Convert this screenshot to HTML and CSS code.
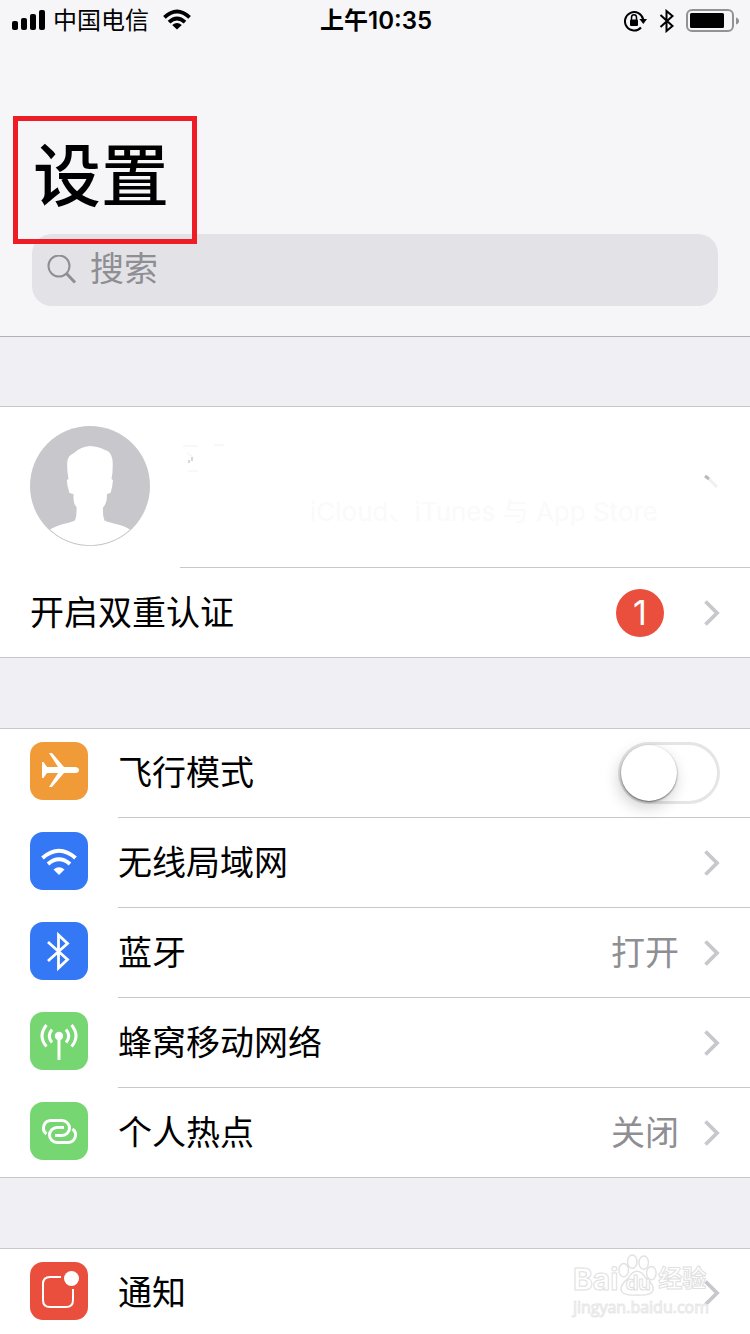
FILE: index.html
```html
<!DOCTYPE html>
<html lang="zh-CN">
<head>
<meta charset="utf-8">
<meta name="viewport" content="width=device-width, initial-scale=1">
<title>设置</title>
<link rel="stylesheet" href="styles.css">
</head>
<body>
<svg class="defs" aria-hidden="true">
  <symbol id="chevron" viewBox="0 0 16 26"><path d="M1.500 1.500 13 13 1.500 24.500" fill="none" stroke="currentColor" stroke-width="3.800"/></symbol>
</svg>
<div class="screen">
  <header class="header">
    <div class="status">
      <div class="status-left">
        <svg width="34" height="22" viewBox="0 0 34 22"><rect x="0" y="12" width="6" height="9" rx="2"/><rect x="9" y="9" width="6" height="12" rx="2"/><rect x="18" y="5" width="6" height="16" rx="2"/><rect x="27" y="1" width="6" height="20" rx="2"/></svg>
        <span class="carrier">中国电信</span>
        <svg width="28" height="22" viewBox="0 0 28 22"><g fill="none" stroke="#000" stroke-width="3.8"><path d="M1.4 8.4Q14-3.400 26.600 8.400"/><path d="M6 13.200Q14 5.800 22 13.200"/></g><path d="M14 20.500 9.200 16Q14 12 18.800 16Z"/></svg>
      </div>
      <time class="clock">上午10:35</time>
      <div class="status-right">
        <svg width="24" height="22" viewBox="0 0 24 22"><path d="M17 17.500A9.200 9.200 0 1 1 19.200 9.500" fill="none" stroke="#000" stroke-width="2"/><path d="M15.400 9h7.600l-3.700 5z"/><rect x="6" y="9.500" width="8" height="6.500" rx="1"/><path d="M7.500 10V7.500a2.500 2.700 0 0 1 5 0V10" fill="none" stroke="#000" stroke-width="1.500"/></svg>
        <svg width="16" height="24" viewBox="0 0 16 24"><path d="M1.500 6 13.500 17 7.500 22V2l6 5L1.500 18" fill="none" stroke="#000" stroke-width="2"/></svg>
        <svg width="54" height="24" viewBox="0 0 54 24"><rect x="1" y="1" width="46" height="21" rx="5" fill="none" stroke="#929294" stroke-width="2"/><rect x="4" y="4" width="34" height="15" rx="1.500"/><path d="M50 8.500q3 1 3 3.500t-3 3.500z" fill="#929294"/></svg>
      </div>
    </div>
    <h1 class="title">设置</h1>
    <label class="search">
      <svg width="30" height="30" viewBox="0 0 30 30" fill="none" stroke="#8e8e93"><circle cx="12" cy="11" r="10.500" stroke-width="2"/><path d="m19 18 9 9.500" stroke-width="3"/></svg>
      <input class="search-input" type="search" placeholder="搜索" aria-label="搜索">
    </label>
  </header>

  <main class="groups">
    <section class="group">
      <a class="profile" href="#account">
        <svg class="avatar" viewBox="0 0 120 120"><circle cx="60" cy="60" r="60" fill="#c7c7cc"/><path d="M20 103.500C29 98 38 97.500 45 94.500Q47 90 46.500 81Q43 78 43.500 68L39.500 67Q37 60 36.800 54L38.500 53Q36.500 42 37.500 34Q39 29 44 27Q50 21 60 20Q69 20.500 75 24Q81 25 82.500 34Q83.300 44 81.500 53L83 54Q82.500 61 80.500 67L77 68Q77 78 73 81.500Q72.500 90 74.500 94.500C82 98 92 98 100 103.500A59 59 0 0 1 20 103.500Z" fill="#fff"/></svg>
        <span class="profile-body">
          <svg class="name-smudge" width="130" height="30" viewBox="0 0 130 30"><path d="M3 4h15M34 3h10M7 11l6 4M8 29h10" stroke="#f8f8f8" stroke-width="2"/><path d="M12 15v4M9 18v3" stroke="#d8d8d8" stroke-width="2"/></svg>
          <span class="account">iCloud、iTunes 与 App Store</span>
        </span>
        <svg class="profile-mark" width="16" height="26" viewBox="0 0 16 26"><path d="M2 2 13 13" stroke="#f0f0f1" stroke-width="3"/><path d="m1 2 4 3" stroke="#b9b9bd" stroke-width="3"/></svg>
      </a>
      <a class="row" href="#auth"><span class="row-body"><span class="label">开启双重认证</span><span class="badge">1</span><svg class="chevron"><use href="#chevron"/></svg></span></a>
    </section>

    <section class="group">
      <div class="row">
        <svg class="icon orange" viewBox="0 0 58 58"><path d="M12 20h1.500L17 25H28L19 11h3L34 25H45.500Q49 25.500 49 28T45.500 31H34L22 45h-3l9-14H17l-3.500 5H12Z" fill="#fff"/></svg>
        <span class="row-body"><label class="label" for="airplane">飞行模式</label><input class="switch" id="airplane" type="checkbox" role="switch"></span>
      </div>
      <a class="row" href="#wlan">
        <svg class="icon blue" viewBox="0 0 58 58"><g fill="none" stroke="#fff" stroke-width="4"><path d="M12.500 26Q29 11.500 45.500 26"/><path d="M18 32Q29 22.500 40 32"/></g><path d="M29 43 23.500 37.500Q29 33 34.500 37.500Z" fill="#fff"/></svg>
        <span class="row-body"><span class="label">无线局域网</span><svg class="chevron"><use href="#chevron"/></svg></span>
      </a>
      <a class="row" href="#bluetooth">
        <svg class="icon blue" viewBox="0 0 58 58"><path d="M18 20 37.500 37.500 28.500 46V13L37.500 21.500 18 39" fill="none" stroke="#fff" stroke-width="2.800"/></svg>
        <span class="row-body"><span class="label">蓝牙</span><span class="value">打开</span><svg class="chevron"><use href="#chevron"/></svg></span>
      </a>
      <a class="row" href="#cellular">
        <svg class="icon green" viewBox="0 0 58 58"><circle cx="29" cy="24" r="4.200" fill="#fff"/><g fill="none" stroke="#fff" stroke-width="3"><path d="M29 24V48" stroke-width="3"/><path d="M22 17.500Q16.500 24 22 30.500M36 17.500Q41.500 24 36 30.500M16.500 13Q7.500 24 16.500 34.500M41.500 13Q50.500 24 41.500 34.500"/></g></svg>
        <span class="row-body"><span class="label">蜂窝移动网络</span><svg class="chevron"><use href="#chevron"/></svg></span>
      </a>
      <a class="row" href="#hotspot">
        <svg class="icon green" viewBox="0 0 58 58"><g fill="none" stroke="#fff" stroke-width="3"><path d="M25 33.500H32A7.500 7.500 0 0 0 32 18.500H21A7.500 7.500 0 0 0 16.500 32"/><path d="M34 25.500H27A7.500 7.500 0 0 0 27 40.500H38A7.500 7.500 0 0 0 42.500 27"/></g></svg>
        <span class="row-body"><span class="label">个人热点</span><span class="value">关闭</span><svg class="chevron"><use href="#chevron"/></svg></span>
      </a>
    </section>

    <section class="group">
      <a class="row" href="#notifications">
        <svg class="icon red" viewBox="0 0 58 58"><path d="M31 15H20Q13 15 13 22V38Q13 45 20 45H36Q43 45 43 38V27" fill="none" stroke="#fff" stroke-width="2"/><circle cx="41.500" cy="16.500" r="7.500" fill="#fff"/></svg>
        <span class="row-body"><span class="label">通知</span><svg class="chevron"><use href="#chevron"/></svg></span>
      </a>
      <div class="watermark">
        <div class="brand"><span>Bai</span><span class="paw"><svg width="40" height="44" viewBox="0 0 42 44" fill="#fff" stroke="#e2e2e2" stroke-width="1.500"><ellipse cx="6" cy="17" rx="5" ry="7"/><ellipse cx="15" cy="8" rx="5" ry="7"/><ellipse cx="27" cy="9" rx="5" ry="7"/><ellipse cx="35" cy="20" rx="5" ry="7"/><path d="M20 18Q25 18 29 25Q38 32 37 38Q35 44 20 43Q4 44 3 37Q3 32 11 25Q15 18 20 18Z"/></svg><span class="du">du</span></span><span class="brand-cn">经验</span></div>
        <div class="site">jingyan.baidu.com</div>
      </div>
    </section>
  </main>
</div>
</body>
</html>
```
FILE: styles.css
```css
* { box-sizing: border-box; }

body {
  margin: 0;
  color: #000;
  background: #efeff4;
  font-family: Inter, "Noto Sans CJK SC", sans-serif;
  font-size: 34px;
}

svg { display: block; flex: none; }
a { color: inherit; text-decoration: none; }
.defs { position: absolute; width: 0; height: 0; }
.screen { height: 100vh; overflow: hidden; }

.header {
  padding-bottom: 30px;
  background: #f6f6f8;
  box-shadow: 0 1px #b2b2b6;
}

.status {
  display: grid;
  grid-template-columns: 1fr auto 1fr;
  align-items: center;
  height: 42px;
  padding: 0 10px 0 12px;
  font-size: 24px;
  line-height: 42px;
}
.status-left, .status-right { display: flex; align-items: center; }
.status-left { gap: 7px; }
.status-left svg { margin-bottom: 2px; }
.carrier { margin-right: 7px; }
.status-right { justify-content: flex-end; gap: 11px; }
.clock { font-weight: 600; }

.title {
  position: relative;
  width: max-content;
  margin: 74px 0 0 13px;
  padding: 2px 12px 0 20px;
  font-size: 68px;
  font-weight: 500;
  line-height: 116px;
}
.title::after {
  content: "";
  position: absolute;
  inset: 0 -16px -10px 0;
  border: 5px solid #ee1c25;
}

.search {
  display: flex;
  align-items: center;
  gap: 13px;
  height: 72px;
  margin: 0 32px;
  padding: 0 15px;
  border-radius: 20px;
  background: #e2e2e7;
}
.search-input {
  flex: 1;
  min-width: 0;
  padding: 0 0 2px;
  border: 0;
  outline: 0;
  background: none;
  color: #8e8e93;
  font: inherit;
  line-height: 48px;
}
.search-input::placeholder { color: #8e8e93; }

.groups { display: flex; flex-direction: column; gap: 70px; padding-top: 70px; }
.group {
  position: relative;
  background: #fff;
  box-shadow: inset 0 1px #c8c7cc;
}

.profile { display: flex; gap: 30px; height: 162px; padding-left: 30px; position: relative; }
.avatar { width: 120px; height: 120px; margin-top: 20px; }
.profile-body {
  display: flex;
  flex: 1;
  flex-direction: column;
  gap: 22px;
  padding-top: 36px;
  border-bottom: 1px solid #c8c7cc;
}
.account { padding-left: 130px; color: #fafafa; font-size: 26px; line-height: 36px; white-space: nowrap; }
.profile-mark { position: absolute; right: 30px; top: 68px; }

.row { display: flex; align-items: center; gap: 30px; height: 90px; padding-left: 30px; }
.row-body {
  display: flex;
  flex: 1;
  align-items: center;
  height: 90px;
  padding-right: 30px;
  border-bottom: 1px solid #c8c7cc;
}
.row:last-child .row-body { border-bottom-color: transparent; }
.row:last-child { box-shadow: inset 0 -1px #c8c7cc; }
.label, .value { line-height: 50px; }
.label { flex: 1; }
.value { margin-right: 25px; color: #8e8e93; }
.chevron { width: 16px; height: 26px; color: #c7c7cc; }

.icon { width: 58px; height: 58px; margin-bottom: 4px; border-radius: 13px; }
.orange { background: #f19b38; }
.blue { background: #3478f6; }
.green { background: #76d672; }
.red { background: #ea4e3d; }

.badge {
  width: 48px;
  height: 48px;
  margin-right: 40px;
  border-radius: 50%;
  background: #ea4e3d;
  color: #fff;
  line-height: 48px;
  text-align: center;
}

.switch {
  appearance: none;
  width: 102px;
  height: 62px;
  margin: 0;
  padding: 3px;
  border-radius: 31px;
  background: #fff;
  box-shadow: inset 0 0 0 3px #e5e5e5;
}
.switch::before {
  content: "";
  display: block;
  width: 56px;
  height: 56px;
  border-radius: 50%;
  background: #fff;
  box-shadow: 0 1px 2px #0008, -2px 6px 16px #0003;
}
.switch:checked { background: #76d672; }
.switch:checked::before { margin-left: auto; }

.watermark {
  position: absolute;
  top: 5px;
  right: 41px;
  color: #fff;
  -webkit-text-stroke: 1px #e0e0e0;
}
.brand { display: flex; align-items: flex-end; font-size: 30px; font-weight: 700; line-height: 36px; }
.brand-cn { font-size: 24px; }
.paw { position: relative; }
.du { position: absolute; inset: auto 0 0; font-size: 20px; line-height: 28px; text-align: center; }
.site { font-family: "Open Sans", sans-serif; font-size: 16px; line-height: 20px; -webkit-text-stroke-color: #e8e8e8; }
```
